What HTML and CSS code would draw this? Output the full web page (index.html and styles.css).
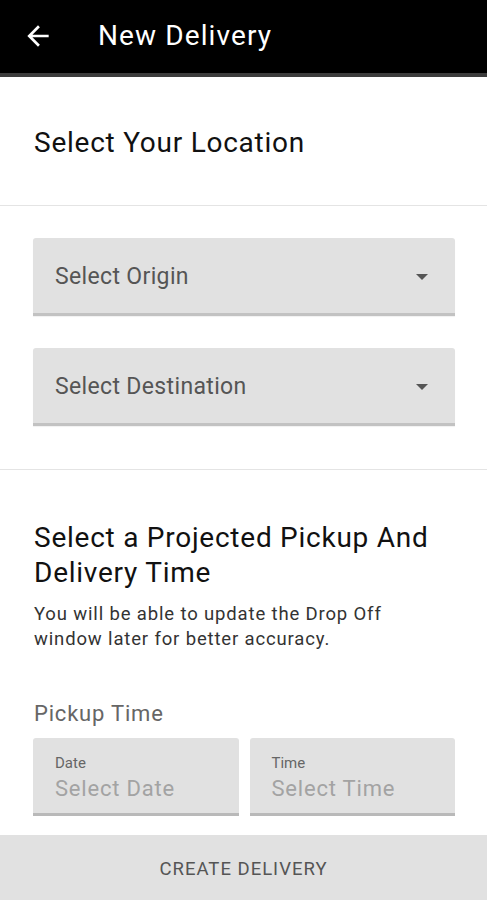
FILE: index.html
```html
<!DOCTYPE html>
<html>
<head>
<meta charset="utf-8">
<link rel="stylesheet" href="styles.css">
</head>
<body>
<header class="appbar">
  <svg class="back" viewBox="0 0 24 24" width="32" height="32"><path fill="#fff" d="M20 11H7.83l5.59-5.59L12 4l-8 8 8 8 1.41-1.41L7.83 13H20v-2z"/></svg>
  <h1 class="appbar-title">New Delivery</h1>
</header>
<main>
  <section class="loc-head">
    <h2 class="section-title">Select Your Location</h2>
  </section>
  <section class="loc-fields">
    <div class="select-box"><span class="select-text">Select Origin</span><span class="caret"></span></div>
    <div class="select-box"><span class="select-text">Select Destination</span><span class="caret"></span></div>
  </section>
  <section class="time-sec">
    <h2 class="section-title multi">Select a Projected Pickup And Delivery Time</h2>
    <p class="desc">You will be able to update the Drop Off window later for better accuracy.</p>
    <div class="field-label">Pickup Time</div>
    <div class="pair">
      <div class="input-box"><span class="in-label">Date</span><span class="in-value">Select Date</span></div>
      <div class="input-box"><span class="in-label">Time</span><span class="in-value">Select Time</span></div>
    </div>
  </section>
</main>
<footer class="bottom-btn">CREATE DELIVERY</footer>
</body>
</html>
```
FILE: styles.css
```css
* { box-sizing: border-box; }
html, body { margin: 0; padding: 0; }
body {
  font-family: Roboto, "Liberation Sans", sans-serif;
  background: #fff;
  width: 487px;
  height: 900px;
  overflow: hidden;
}
.appbar {
  height: 77px;
  background: #000;
  border-bottom: 4px solid #3c3c3c;
  display: flex;
  align-items: center;
  padding-left: 22px;
  padding-bottom: 2px;
}
.back { display: block; flex: none; }
.appbar-title {
  margin: 0 0 0 44px;
  color: #fff;
  font-size: 28px;
  font-weight: 400;
  line-height: 32px;
  letter-spacing: 1.1px;
}
.loc-head {
  height: 129px;
  padding: 3px 34px 0;
  display: flex;
  align-items: center;
  border-bottom: 1px solid #e4e4e4;
}
.section-title {
  margin: 0;
  font-size: 28px;
  font-weight: 400;
  color: #111;
  line-height: 35px;
  letter-spacing: 0.75px;
}
.loc-fields {
  padding: 32px 32px 43px 33px;
  display: flex;
  flex-direction: column;
  gap: 32px;
  border-bottom: 1px solid #e4e4e4;
}
.select-box {
  height: 78px;
  background: #e1e1e1;
  border-bottom: 3px solid #c2c2c2;
  border-radius: 3px 3px 0 0;
  display: flex;
  align-items: center;
  justify-content: space-between;
  padding: 3px 27px 0 22px;
  box-shadow: 0 1px 1px rgba(0,0,0,0.06);
}
.select-text {
  font-size: 23px;
  line-height: 28px;
  color: #555;
  letter-spacing: 0.35px;
}
.caret {
  width: 0; height: 0;
  border-left: 6px solid transparent;
  border-right: 6px solid transparent;
  border-top: 6px solid #555;
}
.time-sec {
  padding: 50px 32px 0 34px;
}
.desc {
  margin: 12px 0 0;
  max-width: 400px;
  font-size: 18.5px;
  line-height: 25px;
  color: #333;
  letter-spacing: 0.85px;
}
.field-label {
  margin-top: 48px;
  font-size: 22px;
  line-height: 28px;
  color: #666;
  letter-spacing: 0.8px;
}
.pair {
  margin: 10px 0 0 -1px;
  display: grid;
  grid-template-columns: 1fr 1fr;
  gap: 11px;
}
.input-box {
  height: 78px;
  background: #e1e1e1;
  border-bottom: 3px solid #b9b9b9;
  border-radius: 3px 3px 0 0;
  padding: 16px 12px 0 22px;
  display: flex;
  flex-direction: column;
  gap: 4px;
}
.in-label {
  font-size: 15px;
  line-height: 18px;
  color: #666;
}
.in-value {
  font-size: 22px;
  line-height: 26px;
  color: #a3a3a3;
  letter-spacing: 0.8px;
}
.bottom-btn {
  position: fixed;
  left: 0; right: 0; bottom: 0;
  height: 65px;
  padding-top: 2px;
  background: #e1e1e1;
  display: flex;
  align-items: center;
  justify-content: center;
  font-size: 18.5px;
  color: #555;
  letter-spacing: 1px;
}
```
